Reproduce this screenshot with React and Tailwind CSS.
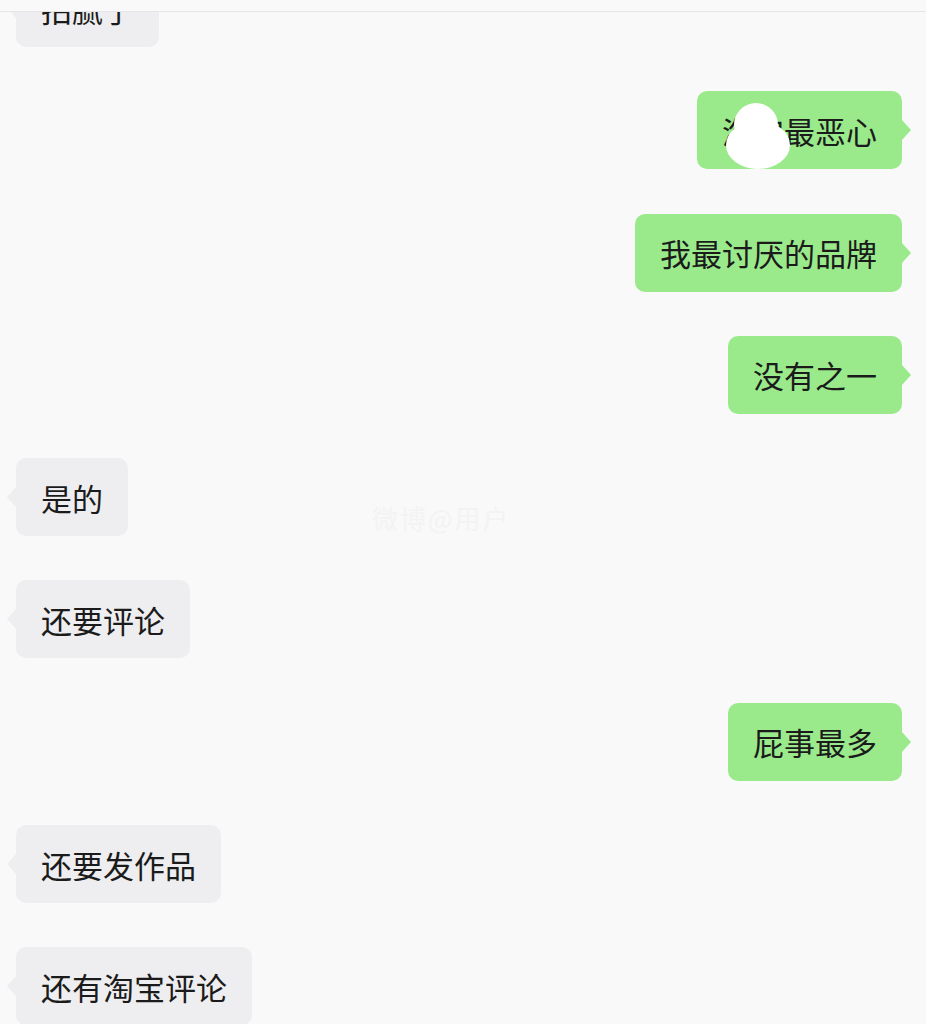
import React from "react";

const messages = [
  { side: "left", text: "拍腻了" },
  { side: "right", text: "淘宝最恶心", masked: true },
  { side: "right", text: "我最讨厌的品牌" },
  { side: "right", text: "没有之一" },
  { side: "left", text: "是的" },
  { side: "left", text: "还要评论" },
  { side: "right", text: "屁事最多" },
  { side: "left", text: "还要发作品" },
  { side: "left", text: "还有淘宝评论" },
];

function Bubble({ side, text, masked }) {
  const mine = side === "right";
  return (
    <div className={mine ? "flex justify-end pr-[24px]" : "flex justify-start pl-[16px]"}>
      <div
        className={
          "relative h-[78px] px-[25px] flex items-center rounded-[10px] text-[31px] text-[#1b1b1b] " +
          (mine ? "bg-[#9aea8c]" : "bg-[#eeeef0]")
        }
      >
        {mine ? (
          <span className="absolute right-[-9px] top-1/2 -translate-y-1/2 w-0 h-0 border-y-[10px] border-y-transparent border-l-[9px] border-l-[#9aea8c]" />
        ) : (
          <span className="absolute left-[-9px] top-1/2 -translate-y-1/2 w-0 h-0 border-y-[10px] border-y-transparent border-r-[9px] border-r-[#eeeef0]" />
        )}
        <span className="whitespace-nowrap leading-none">{text}</span>
        {masked && (
          <svg className="absolute left-[28px] top-[12px]" width="70" height="70" viewBox="0 0 70 70">
            <circle cx="31" cy="22" r="22" fill="#ffffff" />
            <ellipse cx="33" cy="42" rx="32" ry="24" fill="#ffffff" />
          </svg>
        )}
      </div>
    </div>
  );
}

export default function App() {
  return (
    <div
      className="relative w-[926px] h-[1024px] overflow-hidden bg-[#f9f9f9] flex flex-col"
      style={{ fontFamily: '"Noto Sans CJK SC", "Noto Sans", sans-serif' }}
    >
      <div className="relative z-10 h-[12px] shrink-0 bg-[#f9f9f9] border-b border-[#e6e6e6]" />
      <div className="flex-1 overflow-hidden">
        <div className="flex flex-col gap-[44.3px] mt-[-43px]">
          {messages.map((m, i) => (
            <Bubble key={i} {...m} />
          ))}
        </div>
      </div>
      <div className="absolute left-[372px] top-[498px] text-[26px] text-[#f3f3f3] tracking-[2px] select-none">
        微博@用户
      </div>
    </div>
  );
}
